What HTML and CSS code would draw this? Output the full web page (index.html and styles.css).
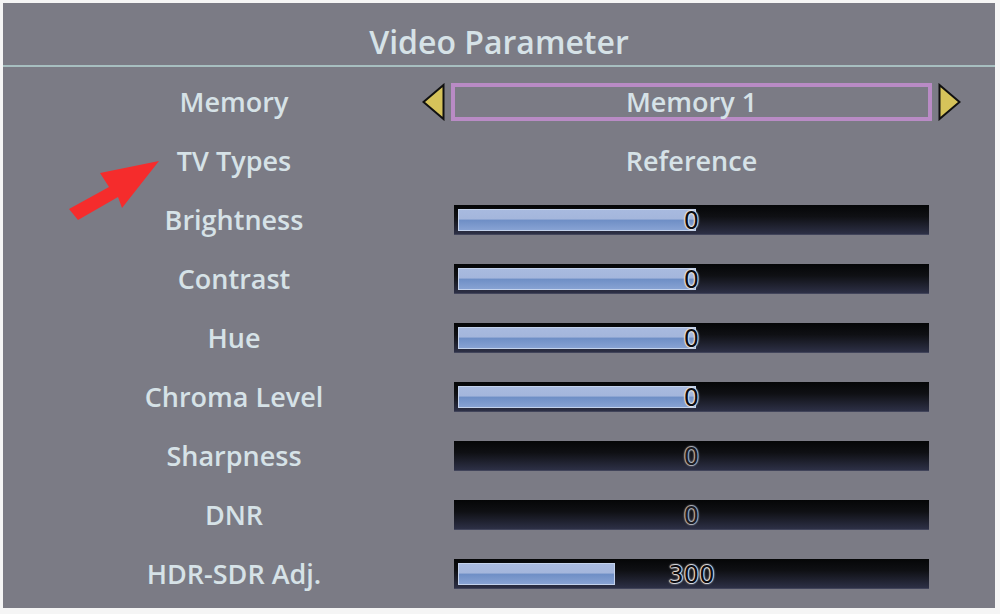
FILE: index.html
```html
<!DOCTYPE html>
<html>
<head>
  <meta charset="UTF-8">
  <title>Video Parameter</title>
  <link rel="stylesheet" href="styles.css">
</head>
<body>
  <div class="screen">
    <h1 class="title">Video Parameter</h1>

    <div class="params">
      <div class="label">Memory</div>
      <div class="control selector">
        <svg class="arrow" width="23" height="38" viewBox="0 0 23 38"><polygon points="1.5,19 21.5,2 21.5,36" fill="#d6c35a" stroke="#111" stroke-width="2" stroke-linejoin="miter"/></svg>
        <div class="selector-box">Memory 1</div>
        <svg class="arrow" width="23" height="38" viewBox="0 0 23 38"><polygon points="21.5,19 1.5,2 1.5,36" fill="#d6c35a" stroke="#111" stroke-width="2" stroke-linejoin="miter"/></svg>
      </div>

      <div class="label">TV Types</div>
      <div class="control value-text">Reference</div>

      <div class="label">Brightness</div>
      <div class="control"><div class="bar"><div class="fill" style="width: 50%"></div><span class="num">0</span></div></div>

      <div class="label">Contrast</div>
      <div class="control"><div class="bar"><div class="fill" style="width: 50%"></div><span class="num">0</span></div></div>

      <div class="label">Hue</div>
      <div class="control"><div class="bar"><div class="fill" style="width: 50%"></div><span class="num">0</span></div></div>

      <div class="label">Chroma Level</div>
      <div class="control"><div class="bar"><div class="fill" style="width: 50%"></div><span class="num">0</span></div></div>

      <div class="label">Sharpness</div>
      <div class="control"><div class="bar"><span class="num dim">0</span></div></div>

      <div class="label">DNR</div>
      <div class="control"><div class="bar"><span class="num dim">0</span></div></div>

      <div class="label">HDR-SDR Adj.</div>
      <div class="control"><div class="bar"><div class="fill" style="width: 33%"></div><span class="num">300</span></div></div>
    </div>

    <!-- annotation arrow -->
    <svg class="pointer" width="110" height="80" viewBox="0 0 110 80">
      <polygon points="159,161 100,173 109,187 69,209 78,220 118,197 122,208" transform="translate(-58,-150)" fill="#f52c2c"/>
    </svg>
  </div>
</body>
</html>
```

FILE: styles.css
```css
body {
  margin: 0;
  padding: 0;
  background-color: #f5f5f5;
}

.screen {
  position: relative;
  width: 992px;
  height: 605px;
  margin: 3px 0 0 3px;
  background-color: #7b7b85;
  font-family: "Open Sans", "Liberation Sans", sans-serif;
  color: #d6e2e7;
  box-sizing: border-box;
}

.title {
  margin: 0;
  height: 64px;
  box-sizing: border-box;
  padding-top: 24px;
  border-bottom: 2px solid #a7bfc0;
  text-align: center;
  font-size: 32px;
  font-weight: 600;
  line-height: 30px;
}

.params {
  display: grid;
  grid-template-columns: 268px 539px;
  grid-template-rows: repeat(9, 59px);
  column-gap: 54px;
  padding: 5px 0 0 97px;
}

.label {
  display: flex;
  align-items: center;
  justify-content: center;
  font-size: 27px;
  font-weight: 600;
  white-space: nowrap;
}

.control {
  display: flex;
  align-items: center;
  justify-content: center;
}

.value-text {
  font-size: 27px;
  font-weight: 600;
}

.selector {
  justify-content: space-between;
}

.arrow {
  display: block;
}

.selector-box {
  width: 481px;
  height: 38px;
  box-sizing: border-box;
  border: 4px solid #b98bc5;
  display: flex;
  align-items: center;
  justify-content: center;
  font-size: 27px;
  font-weight: 600;
}

.bar {
  position: relative;
  width: 475px;
  height: 30px;
  box-sizing: border-box;
  background: linear-gradient(#050607, #0f1014 40%, #2d3046);
  border-bottom: 1px solid #41445a;
  display: flex;
  align-items: center;
  justify-content: center;
}

.fill {
  position: absolute;
  left: 4px;
  top: 4px;
  bottom: 3px;
  box-sizing: border-box;
  border: 1px solid #c3d2ec;
  background: linear-gradient(#a8badf 0%, #a4b6dc 44%, #6f8fc6 52%, #87a2d3 100%);
}

.num {
  position: relative;
  top: 2px;
  font-family: "DejaVu Sans", sans-serif;
  font-size: 24px;
  line-height: 1;
  color: #0c0c10;
  text-shadow: 1px 0 1px #e4e6ea, -1px 0 1px #e4e6ea, 0 1px 1px #e4e6ea, 0 -1px 1px #e4e6ea, 0 0 3px #b8bac4;
}

.num.dim {
  color: #1c1c22;
  text-shadow: 1px 0 1px #b4b6be, -1px 0 1px #b4b6be, 0 1px 1px #b4b6be, 0 -1px 1px #b4b6be, 0 0 3px #8a8c96;
}

.pointer {
  position: absolute;
  left: 55px;
  top: 147px;
}
```
